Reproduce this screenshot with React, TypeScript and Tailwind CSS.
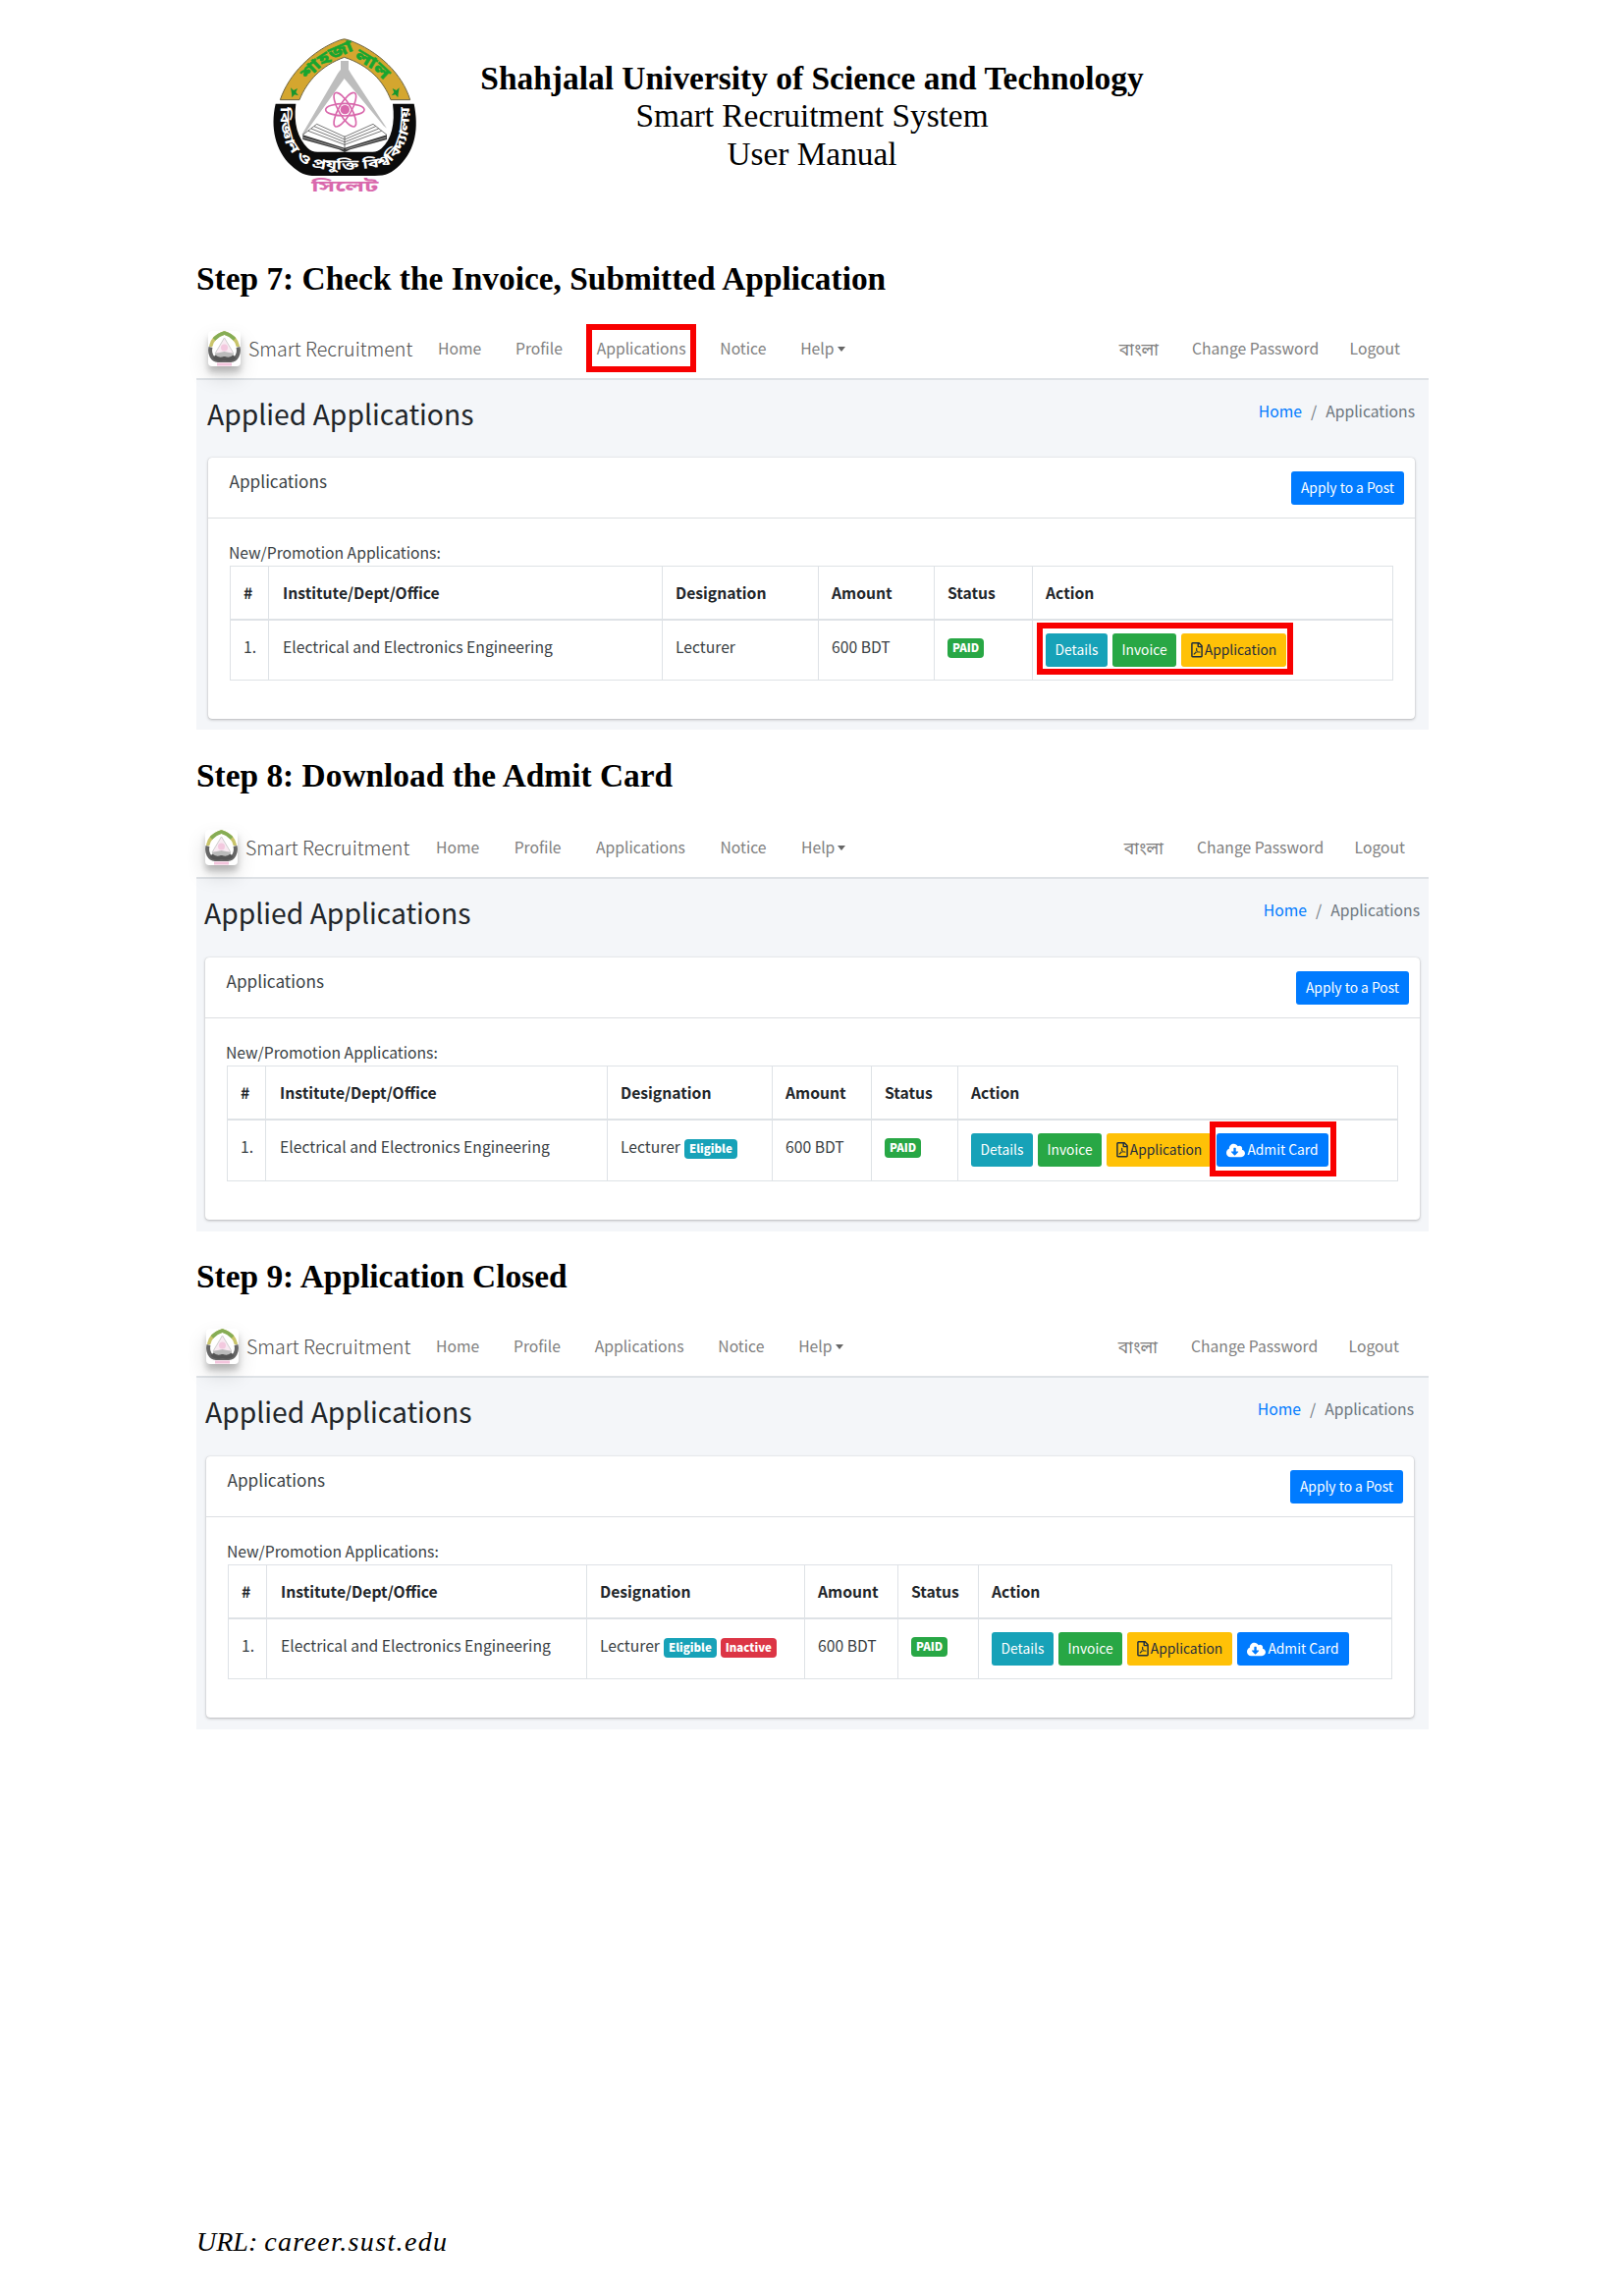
import type { ReactNode } from "react";
import clsx from "clsx";
import { FaCloudDownloadAlt, FaRegFilePdf } from "react-icons/fa";

type Badge = { label: string; color: string };

type Screen = {
  title: string;
  headingClass: string;
  bodyClass: string;
  navClass: string;
  linksClass: string;
  cardClass: string;
  breadcrumbClass: string;
  gridClass: string;
  rowClass: string;
  badges: Badge[];
  highlightNav?: boolean;
  highlightActions?: boolean;
  admitCard?: boolean;
  highlightAdmit?: boolean;
};

const eligible: Badge = { label: "Eligible", color: "bg-[#17a2b8]" };
const inactive: Badge = { label: "Inactive", color: "bg-[#dc3545]" };

const screens: Screen[] = [
  {
    title: "Step 7: Check the Invoice, Submitted Application",
    headingClass: "mt-[55px] mb-[21px]",
    bodyClass: "h-[356px]",
    navClass: "pl-[12px] pr-[29px]",
    linksClass: "ml-[24px] gap-[34.800px]",
    cardClass: "mt-[26px] ml-[12px] mr-[14px] h-[266px]",
    breadcrumbClass: "pl-[11px] pr-[14px]",
    gridClass: "grid-cols-[39px_401px_159px_118px_100px_367px]",
    rowClass: "h-[61px]",
    badges: [],
    highlightNav: true,
    highlightActions: true,
  },
  {
    title: "Step 8: Download the Admit Card",
    headingClass: "mt-[28px] mb-[23px]",
    bodyClass: "h-[359px]",
    navClass: "pl-[9px] pr-[24px]",
    linksClass: "ml-[25px] gap-[35.500px]",
    cardClass: "mt-[27px] ml-[9px] mr-[9px] h-[267px]",
    breadcrumbClass: "pl-[8px] pr-[9px]",
    gridClass: "grid-cols-[39px_348px_168px_101px_88px_448px]",
    rowClass: "h-[62px]",
    badges: [eligible],
    admitCard: true,
    highlightAdmit: true,
  },
  {
    title: "Step 9: Application Closed",
    headingClass: "mt-[27px] mb-[21px]",
    bodyClass: "h-[358px]",
    navClass: "pl-[10px] pr-[30px]",
    linksClass: "ml-[24px] gap-[34.800px]",
    cardClass: "mt-[27px] ml-[10px] mr-[15px] h-[266px]",
    breadcrumbClass: "pl-[9px] pr-[15px]",
    gridClass: "grid-cols-[39px_326px_222px_95px_82px_421px]",
    rowClass: "h-[61px]",
    badges: [eligible, inactive],
    admitCard: true,
  },
];

const UniversityLogo = () => (
  <svg viewBox="0 0 540 570" className="h-[190px] w-[180px]">
    <defs>
      <path id="archText" d="M160 186 C190 148 228 124 272 106 C316 124 360 148 394 188" />
      <path id="baseText" d="M78 268 C74 340 92 396 135 430 C160 450 190 457 272 457 C360 457 395 450 418 430 C456 398 474 345 470 268" />
    </defs>
    {/* gold arch */}
    <path
      d="M76 245 C102 168 172 94 260 62 Q272 57 284 62 C378 95 450 168 473 245 L414 245 C392 188 348 140 272 115 C202 140 158 188 135 245 Z"
      fill="#d4a62f"
      stroke="#6d6440"
      strokeWidth="3"
    />
    <path d="M108 208 l9 8 12 -6 -5 12 8 10 -12 -3 -8 9 -1 -13z M440 208 l-9 8 -12 -6 5 12 -8 10 12 -3 8 9 1 -13z" fill="#17962f" />
    <text fontSize="50" fontWeight="700" fill="#18a52f" stroke="#18a52f" strokeWidth="1.500" fontFamily="'Noto Sans Bengali', 'Noto Sans', sans-serif">
      <textPath href="#archText" textLength="284" lengthAdjust="spacingAndGlyphs">শাহজালাল</textPath>
    </text>
    {/* compass */}
    <path d="M261 126 h24 v26 l8 14 L402 332 392 324 272 180 150 350 142 352 252 164 261 152z" fill="#bdbdbd" />
    {/* atom */}
    <g fill="none" stroke="#d968ac" strokeWidth="5">
      <ellipse cx="274" cy="275" rx="59" ry="19" />
      <ellipse cx="274" cy="275" rx="59" ry="19" transform="rotate(60 274 275)" />
      <ellipse cx="274" cy="275" rx="59" ry="19" transform="rotate(120 274 275)" />
    </g>
    <circle cx="274" cy="275" r="14" fill="#d968ac" />
    {/* open book */}
    <path d="M188 319 L273 358 360 319 402 352 402 366 273 402 145 366 145 352z" fill="#fff" />
    <g fill="none" stroke="#333" strokeWidth="2">
      <path d="M188 319 L273 358 M188 319 L145 352 M273 358 L360 319 402 352" />
      <path d="M180 326 L273 366 368 326 M171 333 L273 374 377 333 M162 340 L273 382 386 340 M273 356 V402" />
    </g>
    <path d="M145 352 L273 392 402 352 V366 L290 397 273 405 256 397 145 366z" fill="#3a3a3a" />
    <path d="M146 360 L270 396 M400 360 L277 396" stroke="#ccc" strokeWidth="2" />
    {/* black base */}
    <path
      d="M62 257 C45 330 62 400 108 444 C136 470 152 477 185 477 L365 477 C400 477 418 468 442 444 C490 396 500 330 485 257 L420 257 C428 318 416 365 386 393 Q375 404 358 404 L190 404 Q172 404 160 392 C130 362 116 316 124 257 Z"
      fill="#0b0b0b"
    />
    <text fontSize="40" fontWeight="700" fill="#fff" fontFamily="'Noto Sans Bengali', 'Noto Sans', sans-serif">
      <textPath href="#baseText" textLength="650" lengthAdjust="spacingAndGlyphs">বিজ্ঞান ও প্রযুক্তি বিশ্ববিদ্যালয়</textPath>
    </text>
    <text
      x="172"
      y="525"
      fontSize="48"
      fontWeight="700"
      fill="#d968ac"
      textLength="204"
      lengthAdjust="spacingAndGlyphs"
      fontFamily="'Noto Sans Bengali', 'Noto Sans', sans-serif"
    >
      সিলেট
    </text>
  </svg>
);

const BrandLogo = () => (
  <svg
    viewBox="0 0 33 36"
    className="h-[36px] w-[33px] shrink-0 rounded bg-white shadow-[0_10px_20px_rgba(0,0,0,0.15),0_6px_6px_rgba(0,0,0,0.2)]"
  >
    <path d="M2.500 16 C4 9 9 4 16.500 2 C24 4 29 9 30.500 16" fill="none" stroke="#c9c46a" strokeWidth="3.500" />
    <path d="M6 8.500 Q10 4 16.500 2 Q23 4 27 8.500" fill="none" stroke="#86ad55" strokeWidth="3.500" />
    <path d="M16.500 7 L7 23 H26z" fill="#f8eaf2" stroke="#cfcfcf" strokeWidth="1" />
    <circle cx="16.500" cy="17" r="3.500" fill="#f3c9df" />
    <path d="M7 23 L16.500 21 26 23 24 28 H9z" fill="#bbb" />
    <path d="M2.500 16.500 C1 23 4 29.500 10 30 H23 C29 29.500 32 23 30.500 16.500" fill="none" stroke="#666" strokeWidth="4" />
    <path d="M6 26 Q10 30 16.500 28 Q23 30 27 26" fill="none" stroke="#555" strokeWidth="4" />
    <rect x="9" y="32.500" width="15" height="3" fill="#f3c4dc" />
  </svg>
);

const Button = ({ className, children }: { className: string; children: ReactNode }) => (
  <button className={clsx("flex h-[34px] shrink-0 items-center justify-center rounded-[3px] text-[13.8px] leading-none whitespace-nowrap", className)}>
    {children}
  </button>
);

const StatusBadge = ({ label, color }: Badge) => (
  <span className={clsx("flex h-[20px] items-center rounded px-[5px] text-[11.5px] font-black leading-none text-white", color)}>{label}</span>
);

const Highlight = ({ className }: { className: string }) => (
  <span className={clsx("pointer-events-none absolute border-[6.500px] border-[#f80000]", className)} />
);

const Navbar = ({ screen }: { screen: Screen }) => (
  <nav className={clsx("flex h-[63px] items-center border-b-2 border-[#dee2e6] bg-white leading-[26px] text-[#808080]", screen.navClass)}>
    <BrandLogo />
    <span className="ml-[8px] w-[169px] pt-px text-[19.600px] font-light whitespace-nowrap text-[#4d4d4d]">Smart Recruitment</span>
    <div className={clsx("flex pt-px", screen.linksClass)}>
      <a>Home</a>
      <a>Profile</a>
      <a className="relative">
        Applications
        {screen.highlightNav && <Highlight className="-left-[11px] -top-[12px] h-[49px] w-[112px]" />}
      </a>
      <a>Notice</a>
      <a className="flex items-center gap-[3px]">
        Help
        <span className="border-x-[4.500px] border-t-[5px] border-x-transparent border-t-[#666]" />
      </a>
    </div>
    <div className="ml-auto flex pt-px">
      <a className="mr-[34px] text-[17.500px]">বাংলা</a>
      <a className="mr-[31.500px]">Change Password</a>
      <a>Logout</a>
    </div>
  </nav>
);

const ApplicationsTable = ({ screen }: { screen: Screen }) => {
  const cell = "flex border-r border-[#dee2e6] pl-[13px]";
  return (
    <div className="border-t border-l border-[#dee2e6]">
      <div className={clsx("grid h-[55px] border-b-2 border-[#dee2e6] font-bold", screen.gridClass)}>
        {["#", "Institute/Dept/Office", "Designation", "Amount", "Status", "Action"].map((name) => (
          <div key={name} className={clsx(cell, "pt-[14px]", name.startsWith("Institute") && "pl-[14px]")}>
            {name}
          </div>
        ))}
      </div>
      <div className={clsx("grid border-b border-[#dee2e6] text-[#3a3f44]", screen.gridClass, screen.rowClass)}>
        <div className={clsx(cell, "pt-[14px]")}>1.</div>
        <div className={clsx(cell, "pt-[14px] pl-[14px]")}>Electrical and Electronics Engineering</div>
        <div className={clsx(cell, "gap-[4px] pt-[14px]")}>
          Lecturer
          {screen.badges.map((badge) => (
            <div key={badge.label} className="pt-[5px]">
              <StatusBadge {...badge} />
            </div>
          ))}
        </div>
        <div className={clsx(cell, "pt-[14px]")}>600 BDT</div>
        <div className={clsx(cell, "pt-[18px]")}>
          <StatusBadge label="PAID" color="bg-[#28a745]" />
        </div>
        <div className={clsx(cell, "pt-[13px]")}>
          <div className="relative flex h-[34px] gap-[5px]">
            <Button className="w-[63px] bg-[#17a2b8] text-white">Details</Button>
            <Button className="w-[65px] bg-[#28a745] text-white">Invoice</Button>
            <Button className="w-[107px] bg-[#ffc107] text-[#1f2d3d]">
              <FaRegFilePdf className="mr-[2px] h-[15.500px] w-[12px]" />
              Application
            </Button>
            {screen.admitCard && (
              <div className="relative">
                <Button className="w-[114px] bg-[#007bff] text-white">
                  <FaCloudDownloadAlt className="mr-[2px] h-[19px] w-[19px]" />
                  Admit Card
                </Button>
                {screen.highlightAdmit && <Highlight className="-left-[7px] -top-[12px] h-[56px] w-[129px]" />}
              </div>
            )}
            {screen.highlightActions && <Highlight className="-left-[9px] -top-[11px] h-[53px] w-[261px]" />}
          </div>
        </div>
      </div>
    </div>
  );
};

const ScreenPanel = ({ screen }: { screen: Screen }) => (
  <section>
    <h2 className={clsx("h-[38px] text-[33.400px] font-bold leading-[38px] text-black", screen.headingClass)}>{screen.title}</h2>
    <div className="text-[15.700px] leading-[26px] text-[#212529] [font-family:'Noto_Sans_CJK_SC','Noto_Sans_Bengali',sans-serif]">
      <Navbar screen={screen} />
      <div className={clsx("flow-root bg-[#f4f6f9]", screen.bodyClass)}>
        <div className={clsx("mt-[13px] flex h-[40px] justify-between", screen.breadcrumbClass)}>
          <h1 className="pt-px text-[28.300px] leading-[40px]">Applied Applications</h1>
          <div className="flex gap-[9px] pt-[6px] text-[#6c757d]">
            <a className="text-[#007bff]">Home</a>
            <span>/</span>
            <span>Applications</span>
          </div>
        </div>
        <div className={clsx("rounded bg-white shadow-[0_0_1px_rgba(0,0,0,0.2),0_1px_3px_rgba(0,0,0,0.25)]", screen.cardClass)}>
          <div className="flex h-[62px] justify-between border-b border-[#dcdfe2] pr-[11px] pl-[21.500px]">
            <h3 className="pt-[11px] text-[17.200px] text-[#3a3f44]">Applications</h3>
            <Button className="mt-[14px] w-[115px] bg-[#007bff] text-white">Apply to a Post</Button>
          </div>
          <div className="px-[22px] pt-[22px]">
            <p className="-ml-px text-[#3a3f44]">New/Promotion Applications:</p>
            <ApplicationsTable screen={screen} />
          </div>
        </div>
      </div>
    </div>
  </section>
);

const App = () => {
  return (
    <div className="flex h-[2338px] w-[1654px] flex-col bg-white pt-[20px] text-black [font-family:'Liberation_Serif',serif]">
      <header className="ml-[260px] flex h-[190px]">
        <UniversityLogo />
        <div className="w-[774px] pt-[41px] text-center text-[33.330px] leading-[38.330px]">
          <p className="text-[33.450px] font-bold">Shahjalal University of Science and Technology</p>
          <p>Smart Recruitment System</p>
          <p>User Manual</p>
        </div>
      </header>

      <main className="ml-[200px] w-[1255px]">
        {screens.map((screen) => (
          <ScreenPanel key={screen.title} screen={screen} />
        ))}
      </main>

      <footer className="mt-auto mb-[39px] ml-[200px] text-[28px] italic leading-[32px]">
        URL: <span className="tracking-[1.350px]">career.sust.edu</span>
      </footer>
    </div>
  );
};

export default App;
